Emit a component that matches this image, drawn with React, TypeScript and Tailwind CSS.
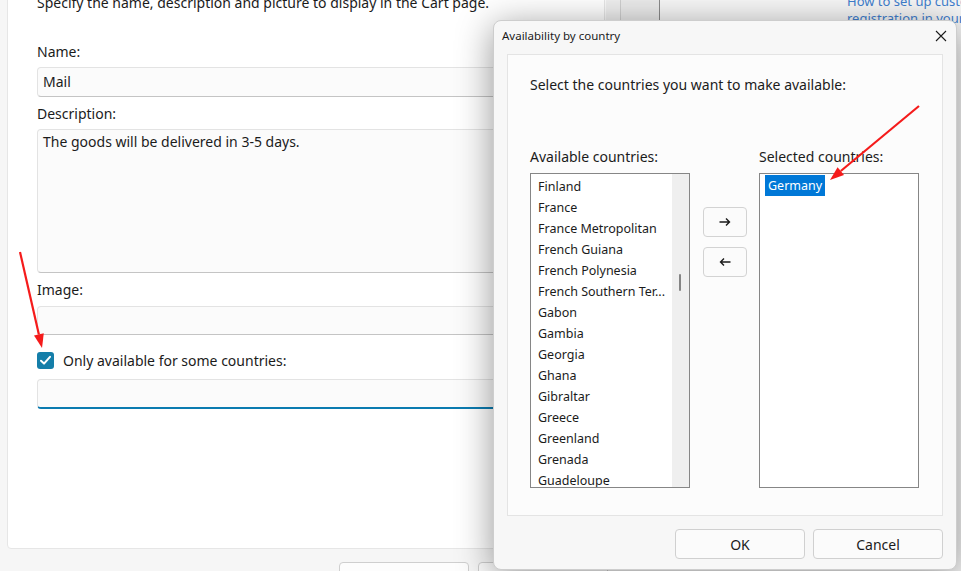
import React from "react";

const available = [
  "Finland",
  "France",
  "France Metropolitan",
  "French Guiana",
  "French Polynesia",
  "French Southern Ter...",
  "Gabon",
  "Gambia",
  "Georgia",
  "Ghana",
  "Gibraltar",
  "Greece",
  "Greenland",
  "Grenada",
  "Guadeloupe",
];

function Field({ h, focused, children }: { h: string; focused?: boolean; children?: React.ReactNode }) {
  return (
    <div
      className={`${h} w-[553px] rounded-[4px] border border-[#e3e3e3] bg-[#fbfbfb] px-[5px] ${
        focused ? "border-b-2 border-b-[#0b7bb0]" : "border-b-[#c4c4c4]"
      }`}
    >
      {children}
    </div>
  );
}

export default function App() {
  return (
    <div className="relative h-[571px] w-[961px] overflow-hidden bg-[#f6f6f6] font-['Noto_Sans',sans-serif] text-[#1b1b1b]">
      {/* main window behind */}
      <div className="flex h-full items-start">
        <div className="ml-[7px] mt-[-40px] flex h-[589px] w-[598px] shrink-0 flex-col rounded-[4px] border border-[#e6e6e6] bg-white pl-[29px]">
          <div className="mt-[32px] h-[20px] whitespace-nowrap text-[14px] leading-[20px]">
            Specify the name, description and picture to display in the Cart page.
          </div>
          <div className="mt-[29px] h-[20px] text-[14px] leading-[20px]">Name:</div>
          <div className="mt-[5px]">
            <Field h="h-[30px]">
              <div className="text-[14px] leading-[28px]">Mail</div>
            </Field>
          </div>
          <div className="mt-[7px] h-[20px] text-[14px] leading-[20px]">Description:</div>
          <div className="mt-[5px]">
            <Field h="h-[144px]">
              <div className="pt-[2px] text-[14px] leading-[20px]">The goods will be delivered in 3-5 days.</div>
            </Field>
          </div>
          <div className="mt-[7px] h-[20px] text-[14px] leading-[20px]">Image:</div>
          <div className="mt-[6px]">
            <Field h="h-[29px]" />
          </div>
          <div className="mt-[16px] flex h-[20px] items-center gap-[9px]">
            <div className="-mt-[2px] flex h-[17px] w-[17px] items-center justify-center rounded-[3px] bg-[#147ea9]">
              <svg width="13" height="13" viewBox="0 0 13 13">
                <path d="M2 6.8 L5 9.6 L11 2.8" fill="none" stroke="white" strokeWidth="2" strokeLinecap="round" strokeLinejoin="round" />
              </svg>
            </div>
            <div className="text-[14px] leading-[20px]">Only available for some countries:</div>
          </div>
          <div className="mt-[8px]">
            <Field h="h-[30px]" focused />
          </div>
        </div>
        <div className="h-[560px] w-[15px] shrink-0 border-l border-[#fafafa] bg-[#efefef]" />
        <div className="h-[560px] w-[40px] shrink-0 border-x border-l-[#cfcfcf] border-r-[#8a8a8a] bg-[#ebebeb]" />
        <div className="min-w-0 flex-1 overflow-hidden bg-[#f7f7f7] pl-[187px] text-[13px] leading-[17px] text-[#3f7fcf]">
          <div className="-mt-[7px] whitespace-nowrap">How to set up customer</div>
          <div className="whitespace-nowrap">registration in your</div>
          <div className="whitespace-nowrap">online store..........</div>
        </div>
      </div>

      {/* bottom buttons of main window */}
      <div className="absolute left-[339px] top-[562px] flex gap-[9px]">
        <div className="h-[30px] w-[130px] rounded-[4px] border border-[#cfcfcf] bg-[#fdfdfd]" />
        <div className="h-[30px] w-[130px] rounded-[4px] border border-[#cfcfcf] bg-[#fdfdfd]" />
      </div>

      {/* dialog */}
      <div className="absolute left-[493px] top-[20px] flex h-[550px] w-[464px] flex-col rounded-[8px] border border-[#cdcdcd] bg-[#f7f7f7] shadow-[0_6px_36px_rgba(0,0,0,0.42)]">
        <div className="flex h-[33px] items-center justify-between pl-[8px] pr-[9px]">
          <div className="-mt-[4px] text-[11.5px] leading-[16px]">Availability by country</div>
          <svg width="12" height="12" viewBox="0 0 12 12" className="-mt-[3px]">
            <path d="M1 1 L11 11 M11 1 L1 11" stroke="#1b1b1b" strokeWidth="1.1" />
          </svg>
        </div>
        <div className="mx-[13px] flex h-[462px] flex-col border border-[#e4e4e4] bg-[#fcfcfc] pl-[22px]">
          <div className="mt-[20px] h-[20px] text-[14px] leading-[20px]">Select the countries you want to make available:</div>
          <div className="mt-[52px] flex">
            <div className="flex w-[160px] flex-col">
              <div className="h-[20px] text-[14px] leading-[20px]">Available countries:</div>
              <div className="mt-[6px] flex h-[315px] overflow-hidden border border-[#868686] bg-white">
                <div className="flex-1 overflow-hidden pl-[7px] pt-[2px]">
                  {available.map((c) => (
                    <div key={c} className="h-[21px] whitespace-nowrap text-[12.5px] leading-[21px]">
                      {c}
                    </div>
                  ))}
                </div>
                <div className="relative w-[17px] bg-[#efefef]">
                  <div className="absolute left-[7px] top-[100px] h-[17px] w-[2px] rounded-full bg-[#858585]" />
                </div>
              </div>
            </div>
            <div className="ml-[13px] mr-[12px] flex w-[44px] flex-col gap-[10px] pt-[60px]">
              <div className="flex h-[30px] items-center justify-center rounded-[4px] border border-[#d3d3d3] bg-[#fbfbfb]">
                <svg width="12" height="10" viewBox="0 0 12 10">
                  <path d="M0.5 5 H10.5 M7 1.5 L10.5 5 L7 8.5" fill="none" stroke="#1b1b1b" strokeWidth="1.4" />
                </svg>
              </div>
              <div className="flex h-[30px] items-center justify-center rounded-[4px] border border-[#d3d3d3] bg-[#fbfbfb]">
                <svg width="12" height="10" viewBox="0 0 12 10">
                  <path d="M11.5 5 H1.5 M5 1.5 L1.5 5 L5 8.5" fill="none" stroke="#1b1b1b" strokeWidth="1.4" />
                </svg>
              </div>
            </div>
            <div className="flex w-[160px] flex-col">
              <div className="h-[20px] text-[14px] leading-[20px]">Selected countries:</div>
              <div className="mt-[6px] h-[315px] border border-[#868686] bg-white pl-[5px] pt-[1px]">
                <div className="h-[21px] w-fit bg-[#0078d7] px-[3px] text-[12.5px] leading-[21px] text-white">Germany</div>
              </div>
            </div>
          </div>
        </div>
        <div className="mr-[13px] mt-[13px] flex justify-end gap-[8px]">
          <div className="flex h-[30px] w-[130px] items-center justify-center rounded-[4px] border border-[#d0d0d0] bg-[#fbfbfb] text-[14px]">
            OK
          </div>
          <div className="flex h-[30px] w-[130px] items-center justify-center rounded-[4px] border border-[#d0d0d0] bg-[#fbfbfb] text-[14px]">
            Cancel
          </div>
        </div>
      </div>

      {/* annotation arrows */}
      <svg className="pointer-events-none absolute inset-0" width="961" height="571" viewBox="0 0 961 571">
        <line x1="20" y1="252" x2="38.9" y2="334.4" stroke="#f51b1b" strokeWidth="2.2" />
        <polygon points="42,348 43.8,333.2 34,335.5" fill="#f51b1b" />
        <line x1="919" y1="106" x2="840.8" y2="171" stroke="#f51b1b" strokeWidth="2.2" />
        <polygon points="830,180 844,174.9 837.6,167.2" fill="#f51b1b" />
      </svg>
    </div>
  );
}
